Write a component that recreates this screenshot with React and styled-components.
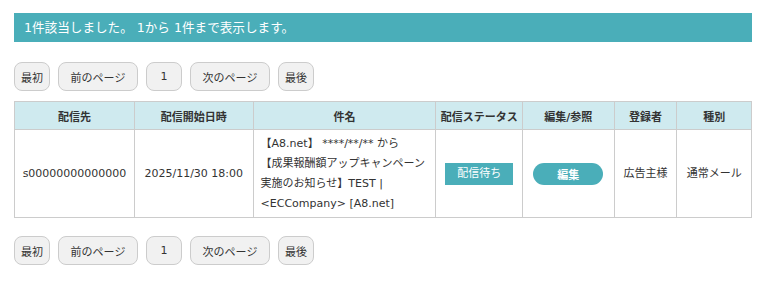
import React from "react";
import styled, { createGlobalStyle } from "styled-components";

const GlobalStyle = createGlobalStyle`
  body {
    margin: 0;
    background: #fff;
    font-family: "DejaVu Sans", "Noto Sans CJK JP", sans-serif;
    color: #333;
  }
`;

const Page = styled.div`
  padding: 13px 9px 0 14px;
`;

const Banner = styled.div`
  background: #4aaeb9;
  color: #fff;
  font-size: 12.6px;
  height: 29px;
  line-height: 29px;
  padding: 0 10px;
`;

const Pager = styled.div`
  display: flex;
  gap: 8px;
  margin: ${(p) => p.$margin};
`;

const PageButton = styled.button`
  box-sizing: border-box;
  font-family: inherit;
  font-size: 11px;
  color: #333;
  height: 29px;
  width: ${(p) => (p.$wide ? "80px" : "36px")};
  padding: 0;
  background: #f1f1f1;
  border: 1px solid #ccc;
  border-radius: 8px;
  cursor: pointer;
`;

const Table = styled.table`
  width: 738px;
  border-collapse: collapse;
  font-size: 11px;
`;

const Th = styled.th`
  background: #cfeaef;
  border: 1px solid #ccc;
  height: 27px;
  padding: 0;
  font-weight: bold;
  width: ${(p) => p.$w}px;
`;

const Td = styled.td`
  border: 1px solid #ccc;
  padding: 4px ${(p) => (p.$left ? "7px" : "2px")} 3px;
  line-height: 20px;
  white-space: nowrap;
  text-align: ${(p) => (p.$left ? "left" : "center")};
  vertical-align: middle;
`;

const Status = styled.span`
  display: inline-block;
  background: #4aaeb9;
  color: #fff;
  width: 68px;
  height: 22px;
  line-height: 22px;
  font-size: 11px;
`;

const EditButton = styled.button`
  font-family: inherit;
  background: #4aaeb9;
  color: #fff;
  font-weight: bold;
  font-size: 11px;
  width: 70px;
  height: 22px;
  border: none;
  border-radius: 11px;
  cursor: pointer;
`;

const columns = [
  ["配信先", 120],
  ["配信開始日時", 119],
  ["件名", 182],
  ["配信ステータス", 87],
  ["編集/参照", 92],
  ["登録者", 63],
  ["種別", 75],
];

function Pagination({ margin }) {
  return (
    <Pager $margin={margin}>
      <PageButton>最初</PageButton>
      <PageButton $wide>前のページ</PageButton>
      <PageButton>1</PageButton>
      <PageButton $wide>次のページ</PageButton>
      <PageButton>最後</PageButton>
    </Pager>
  );
}

export default function App() {
  return (
    <Page>
      <GlobalStyle />
      <Banner>1件該当しました。 1から 1件まで表示します。</Banner>
      <Pagination margin="20px 0 10px" />
      <Table>
        <thead>
          <tr>
            {columns.map(([label, w]) => (
              <Th key={label} $w={w}>
                {label}
              </Th>
            ))}
          </tr>
        </thead>
        <tbody>
          <tr>
            <Td>s00000000000000</Td>
            <Td>2025/11/30 18:00</Td>
            <Td $left>
              【A8.net】 ****/**/** から
              <br />
              【成果報酬額アップキャンペーン
              <br />
              実施のお知らせ】TEST |
              <br />
              &lt;ECCompany&gt; [A8.net]
            </Td>
            <Td>
              <Status>配信待ち</Status>
            </Td>
            <Td>
              <EditButton>編集</EditButton>
            </Td>
            <Td>広告主様</Td>
            <Td>通常メール</Td>
          </tr>
        </tbody>
      </Table>
      <Pagination margin="18px 0 0" />
    </Page>
  );
}
